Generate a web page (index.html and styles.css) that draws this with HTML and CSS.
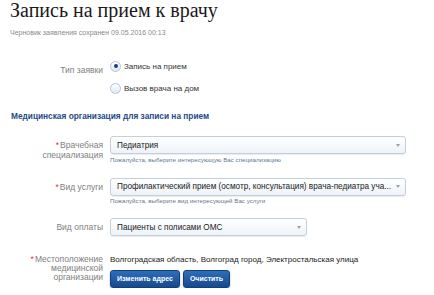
FILE: index.html
```html
<!DOCTYPE html>
<html lang="ru">

<head>
    <meta charset="UTF-8">
    <meta name="viewport" content="width=device-width, initial-scale=1.0">
    <title>Запись на прием к врачу</title>
    <link rel="stylesheet" href="styles.css">
</head>

<body>
    <h1 class="title">Запись на прием к врачу</h1>
    <div class="draft">Черновик заявления сохранен 09.05.2016 00:13</div>

    <div class="row row-type">
        <div class="lbl lbl-type">Тип заявки</div>
        <div class="field">
            <label class="radio">
                <span class="circle checked"></span> Запись на прием
            </label>
            <label class="radio">
                <span class="circle"></span> Вызов врача на дом
            </label>
        </div>
    </div>

    <div class="section">Медицинская организация для записи на прием</div>

    <div class="row row-spec">
        <div class="lbl"><span class="req">*</span>Врачебная<br>специализация</div>
        <div class="field">
            <div class="select">
                <span class="val">Педиатрия</span>
                <span class="arrow"></span>
            </div>
            <div class="hint">Пожалуйста, выберите интересующую Вас специализацию</div>
        </div>
    </div>

    <div class="row row-service">
        <div class="lbl"><span class="req">*</span>Вид услуги</div>
        <div class="field">
            <div class="select">
                <span class="val">Профилактический прием (осмотр, консультация) врача-педиатра уча...</span>
                <span class="arrow"></span>
            </div>
            <div class="hint">Пожалуйста, выберите вид интересующей Вас услуги</div>
        </div>
    </div>

    <div class="row row-pay">
        <div class="lbl">Вид оплаты</div>
        <div class="field">
            <div class="select short">
                <span class="val">Пациенты с полисами ОМС</span>
                <span class="arrow"></span>
            </div>
        </div>
    </div>

    <div class="row row-place">
        <div class="lbl lbl-place"><span class="req">*</span>Местоположение<br>медицинской<br>организации</div>
        <div class="field">
            <div class="address">Волгоградская область, Волгоград город, Электростальская улица</div>
            <div class="buttons">
                <button class="btn">Изменить адрес</button>
                <button class="btn">Очистить</button>
            </div>
        </div>
    </div>
</body>

</html>
```

FILE: styles.css
```css
body{
    margin: 0;
    padding: 0 10px;
    background: #fff;
    font-family: "Liberation Sans", Arial, sans-serif;
    color: #222;
}
.title{
    margin: 0;
    font-family: "Liberation Serif", "Times New Roman", serif;
    font-weight: normal;
    font-size: 20px;
    line-height: 20px;
    color: #1a1a1a;
}
.draft{
    margin-top: 8px;
    font-size: 7px;
    line-height: 9px;
    color: #8a8a8a;
}
.row{
    display: grid;
    grid-template-columns: 93px 1fr;
    column-gap: 7px;
}
.lbl{
    text-align: right;
    font-size: 8.5px;
    line-height: 10px;
    padding-top: 4px;
    color: #808080;
}
.req{
    color: #d8343a;
    margin-right: 1px;
}
.row-type{
    margin-top: 23px;
}
.lbl-type{
    padding-top: 5px;
}
.radio{
    display: flex;
    align-items: center;
    gap: 3px;
    height: 12px;
    font-size: 8px;
    color: #333;
}
.radio + .radio{
    margin-top: 10px;
}
.circle{
    width: 9px;
    height: 9px;
    border: 1px solid #b3c6de;
    border-radius: 50%;
    background: linear-gradient(#fff, #dfe7f3);
    display: flex;
    align-items: center;
    justify-content: center;
}
.circle.checked::after{
    content: "";
    width: 4px;
    height: 4px;
    border-radius: 50%;
    background: #173f80;
}
.section{
    margin-top: 17px;
    font-size: 8.3px;
    line-height: 10px;
    font-weight: bold;
    color: #1e4a85;
    padding-left: 1px;
}
.row-spec{
    margin-top: 15px;
}
.row-service{
    margin-top: 14px;
}
.row-pay{
    margin-top: 13px;
}
.select{
    box-sizing: border-box;
    width: 296px;
    height: 18px;
    border: 1px solid #c3cfdd;
    border-radius: 3px;
    background: linear-gradient(#fff, #eef3f8);
    box-shadow: 0 1px 1px rgba(0,0,0,0.08);
    display: flex;
    align-items: center;
    padding: 0 5px 0 6px;
    font-size: 8.2px;
    color: #222;
}
.select.short{
    width: 197px;
}
.val{
    flex: 1;
    white-space: nowrap;
    overflow: hidden;
}
.arrow{
    width: 0;
    height: 0;
    border-left: 2.5px solid transparent;
    border-right: 2.5px solid transparent;
    border-top: 3px solid #a0a0a0;
    margin-left: 4px;
}
.hint{
    margin-top: 1.5px;
    font-size: 6.2px;
    line-height: 8px;
    color: #5f7892;
}
.row-place{
    margin-top: 19px;
}
.lbl-place{
    padding-top: 0;
    line-height: 9px;
}
.address{
    font-size: 8px;
    line-height: 9.5px;
    color: #222;
}
.buttons{
    display: flex;
    gap: 3px;
    margin-top: 5px;
}
.btn{
    height: 18px;
    padding: 0 6px;
    border: 1px solid #123f7a;
    border-radius: 3px;
    background: linear-gradient(#2f6db9, #164a8e);
    box-shadow: 0 1px 2px rgba(0,0,0,0.3);
    color: #fff;
    font-family: "Liberation Sans", Arial, sans-serif;
    font-size: 7px;
    font-weight: bold;
}
```
